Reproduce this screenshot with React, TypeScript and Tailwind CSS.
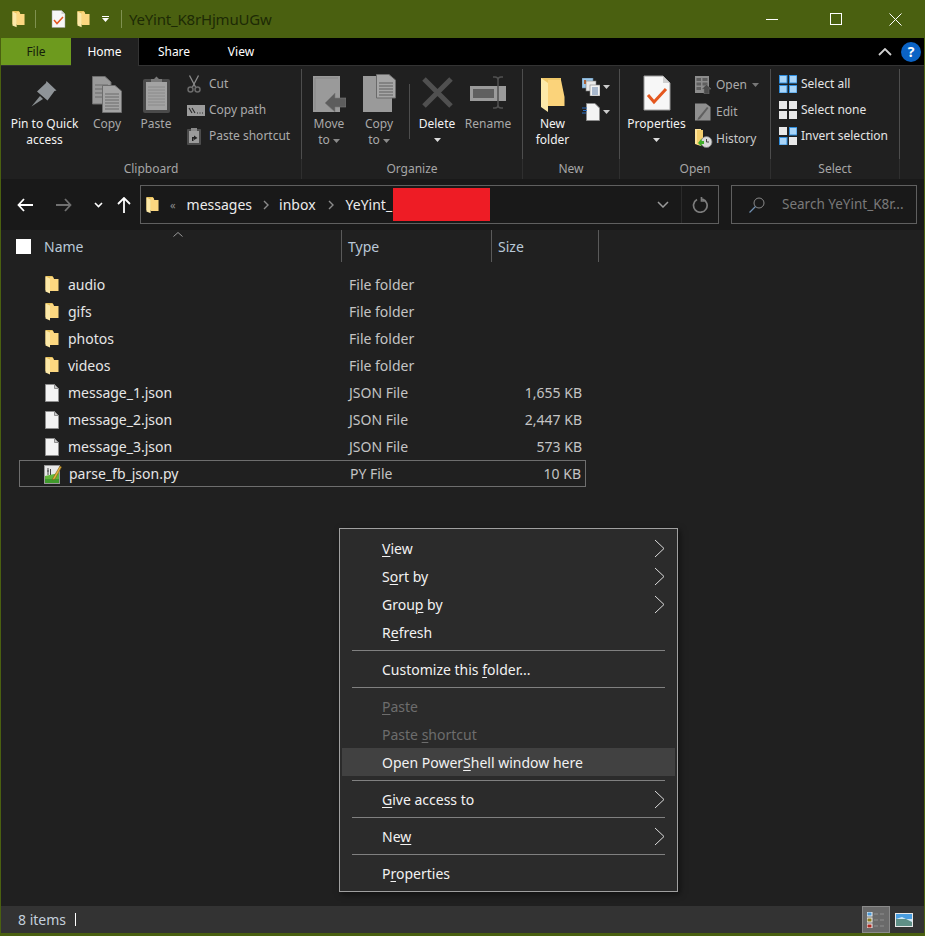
import React from "react";

const Folder = ({ w = 14, h = 19 }: { w?: number; h?: number }) => (
  <svg width={w} height={h} viewBox="0 0 14 19" className="block shrink-0">
    <path d="M0.5 1H7.5L8.5 3V15H0.5Z" fill="#e8c25c" />
    <path d="M5 2H8L9 4H13.5V16H5Z" fill="#fcd780" />
    <path d="M0.5 1.5L5 3.5V18.5L0.5 16.5Z" fill="#fde9a8" />
  </svg>
);

const FileIcon = () => (
  <svg width="14" height="18" viewBox="0 0 14 18" className="block shrink-0">
    <path d="M0.5 0.5H9.5L13.5 4.5V17.5H0.5Z" fill="#f4f4f4" stroke="#8f8f8f" />
    <path d="M9.5 0.5V4.5H13.5Z" fill="#c9c9c9" stroke="#8f8f8f" />
  </svg>
);

const PyIcon = () => (
  <svg width="18" height="20" viewBox="0 0 18 20" className="block shrink-0">
    <rect x="0.5" y="1.5" width="15" height="18" fill="#e8e8e8" stroke="#9a9a9a" />
    <path d="M1 12L15 9V19H1Z" fill="#62b53a" />
    <path d="M1 15H15V19H1Z" fill="#3f9a2c" />
    <path d="M4 4V11M6.5 5V11M3 7H5" stroke="#444" strokeWidth="1" />
    <path d="M9 14L16 2L17.5 3L11 15L8.5 16Z" fill="#e8b43c" stroke="#7a5a16" strokeWidth="0.6" />
  </svg>
);

const CheckDoc = ({ big }: { big?: boolean }) => (
  <svg width={big ? 28 : 15} height={big ? 36 : 18} viewBox="0 0 28 36" className="block shrink-0">
    <path d="M1 1H20L27 8V35H1Z" fill="#f7f7f7" stroke="#9a9a9a" strokeWidth="1" />
    <path d="M20 1V8H27Z" fill="#cfcfcf" />
    <path d="M5 20L11 27L23 14" fill="none" stroke="#e4571f" strokeWidth="3" />
  </svg>
);

const GrayDocs = () => (
  <svg width="30" height="37" viewBox="0 0 30 37" className="block">
    <path d="M0.5 0.5H13L19 6V28H0.5Z" fill="#9a9a9a" stroke="#6d6d6d" />
    <path d="M3 9H16M3 13H16M3 17H16M3 21H16" stroke="#6a6a6a" />
    <path d="M10.5 9.5H23L29.5 15V36.5H10.5Z" fill="#a4a4a4" stroke="#6d6d6d" />
    <path d="M13 18H27M13 21H27M13 24H27M13 27H27M13 30H27M13 33H27" stroke="#6a6a6a" />
  </svg>
);

const Clipboard = () => (
  <svg width="27" height="37" viewBox="0 0 27 37" className="block">
    <rect x="0" y="3" width="27" height="34" rx="2" fill="#4a4a4a" />
    <rect x="3" y="6" width="21" height="28" fill="#a3a3a3" />
    <path d="M5 11H22M5 14H22M5 17H22M5 20H22M5 23H22M5 26H22M5 29H22" stroke="#8a8a8a" />
    <path d="M8 6V3H11L13.500 0.500L16 3H19V6Z" fill="#7a7a7a" />
  </svg>
);

const Pin = () => (
  <svg width="27" height="26" viewBox="0 0 27 26" className="block">
    <path d="M0.5 25.500L9 15L12 18Z" fill="#8a8f92" />
    <path d="M6 10.500L15 2L15.500 0L25.500 9.500L23.500 10L16.500 19.500Z" fill="#8f9498" />
  </svg>
);

const Scissors = () => (
  <svg width="14" height="18" viewBox="0 0 14 18" className="block">
    <path d="M2.500 0.500L8.500 12M11.500 0.500L5.500 12" stroke="#8c8c8c" strokeWidth="1.300" fill="none" />
    <circle cx="3.500" cy="14.500" r="2.500" fill="none" stroke="#6a6a6a" strokeWidth="1.500" />
    <circle cx="10.500" cy="14.500" r="2.500" fill="none" stroke="#6a6a6a" strokeWidth="1.500" />
  </svg>
);

const CopyPath = () => (
  <svg width="18" height="11" viewBox="0 0 18 11" className="block">
    <rect width="18" height="11" fill="#9c9c9c" />
    <path d="M2 3L5 8M5 3L8 8" stroke="#2a2a2a" strokeWidth="1.100" />
    <path d="M10 8H11M12.500 8H13.500M15 8H16" stroke="#2a2a2a" />
  </svg>
);

const PasteShortcut = () => (
  <svg width="14" height="18" viewBox="0 0 14 18" className="block">
    <rect y="2" width="14" height="16" rx="1" fill="#4c4c4c" />
    <rect x="2" y="4" width="10" height="12" fill="#9b9b9b" />
    <path d="M4 1H10V4H4Z" fill="#8a8a8a" />
    <path d="M5 14V10H7V8.500L10.500 11L7 13V11.500H6.500V14Z" fill="#222" />
  </svg>
);

const MoveTo = () => (
  <svg width="33" height="36" viewBox="0 0 33 36" className="block">
    <rect width="27" height="36" fill="#9a9a9a" />
    <path d="M2 34V2H25" fill="none" stroke="#888" />
    <path d="M12 27L22 17V22H33V31H22V36Z" fill="#5d5d5d" stroke="#7a7a7a" strokeWidth="0.600" />
  </svg>
);

const CopyTo = () => (
  <svg width="33" height="38" viewBox="0 0 33 38" className="block">
    <path d="M0 2H14L29 8V38H0Z" fill="#9a9a9a" />
    <path d="M13.500 0.500H26L32.500 6V24H13.500Z" fill="#a6a6a6" stroke="#6a6a6a" />
    <path d="M16 9H30M16 12H30M16 15H30M16 18H30M16 21H30" stroke="#5f5f5f" />
  </svg>
);

const DeleteX = () => (
  <svg width="31" height="31" viewBox="0 0 31 31" className="block">
    <path d="M2 2L29 29M29 2L2 29" stroke="#505050" strokeWidth="5" />
  </svg>
);

const Rename = () => (
  <svg width="37" height="33" viewBox="0 0 37 33" className="block">
    <rect x="0" y="10" width="36" height="15" fill="#9a9a9a" />
    <rect x="3" y="13" width="21" height="9" fill="#5f5f5f" />
    <path d="M23 1H25Q28 1 28 4V29Q28 32 31 32H33M33 1H31Q28 1 28 4M28 29Q28 32 25 32H23" fill="none" stroke="#505050" strokeWidth="1.500" />
  </svg>
);

const BigFolder = () => (
  <svg width="24" height="35" viewBox="0 0 24 35" className="block">
    <path d="M0 1H20V28H0Z" fill="#efc768" />
    <path d="M7 3H20L23.500 20V29H7Z" fill="#fbd37a" />
    <path d="M0 1L7 6V35L0 30Z" fill="#fde9a8" />
  </svg>
);

const NewItem = () => (
  <svg width="18" height="18" viewBox="0 0 18 18" className="block">
    <rect x="0" y="0" width="11" height="10" fill="#9bc7ea" stroke="#5e7f9c" strokeWidth="0.600" />
    <rect x="4" y="3" width="10" height="10" fill="#e9e9e9" stroke="#7d7d7d" strokeWidth="0.600" />
    <rect x="8" y="7" width="10" height="11" fill="#f4f4f4" stroke="#7d7d7d" strokeWidth="0.600" />
    <path d="M10 10H16M10 12H16M10 14H16M10 16H16" stroke="#5f7ea8" />
    <rect x="2" y="2" width="2" height="4" fill="#a8633a" />
  </svg>
);

const EasyAccess = () => (
  <svg width="18" height="18" viewBox="0 0 18 18" className="block">
    <path d="M4.500 0.500H13L17.500 5V17.500H4.500Z" fill="#f4f4f4" stroke="#8c8c8c" />
    <path d="M0 5H5M1 7.500H5M0 10H4" stroke="#2a6fc4" strokeWidth="1.200" />
  </svg>
);

const OpenIcon = () => (
  <svg width="18" height="18" viewBox="0 0 18 18" className="block">
    <rect x="0" y="0" width="14" height="17" fill="#8d8d8d" />
    <path d="M1.500 2H6V5H1.500ZM1.500 6.500H6V9.500H1.500ZM1.500 11H6V14H1.500ZM7.500 2H12.500V5H7.500ZM7.500 6.500H12.500V9.500H7.500Z" fill="#5f5f5f" />
    <path d="M7 13L11.500 8.500L16 13H14V18H9V13Z" fill="#4c4c4c" stroke="#777" strokeWidth="0.500" />
  </svg>
);

const EditIcon = () => (
  <svg width="16" height="18" viewBox="0 0 16 18" className="block">
    <path d="M0 0.500H11L15.500 4V17.500H0Z" fill="#8f8f8f" />
    <path d="M3 15L12 4L13.500 5L5 16L2.500 17Z" fill="#5f5f5f" />
  </svg>
);

const HistoryIcon = () => (
  <svg width="18" height="19" viewBox="0 0 18 19" className="block">
    <path d="M0 0H6V17L0 15Z" fill="#fde39a" />
    <path d="M2 1H8V16H2Z" fill="#f3cd6c" />
    <circle cx="11.500" cy="13" r="5.500" fill="#d9d9d9" stroke="#7a7a7a" strokeWidth="0.800" />
    <path d="M11.500 10V13H14" stroke="#444" fill="none" />
    <path d="M3 14L6.500 9.500V12H9V15H6.500V17.500Z" fill="#3fae2a" />
  </svg>
);

const Grid = ({ on }: { on: boolean[] }) => (
  <svg width="18" height="18" viewBox="0 0 18 18" className="block">
    {on.some(Boolean) && <rect width="18" height="18" fill="none" />}
    {[0, 1, 2, 3].map((i) => {
      const x = i % 2 === 0 ? 0 : 10;
      const y = i < 2 ? 0 : 10;
      return on[i] ? (
        <rect key={i} x={x + 0.5} y={y + 0.5} width="7.500" height="7.500" fill="#a9d5f8" stroke="#2f8fe0" />
      ) : (
        <rect key={i} x={x} y={y} width="8" height="8" fill="#e9e9e9" />
      );
    })}
  </svg>
);

const Caret = ({ color = "#8a8a8a" }: { color?: string }) => (
  <svg width="7" height="4" viewBox="0 0 7 4" className="inline-block">
    <path d="M0 0H7L3.500 4Z" fill={color} />
  </svg>
);

const Big = ({
  w,
  icon,
  lines,
  color = "text-[#a9a9a9]",
  iconH = 47,
  caret,
}: {
  w: number;
  icon: React.ReactNode;
  lines: React.ReactNode[];
  color?: string;
  iconH?: number;
  caret?: string;
}) => (
  <div className={`flex flex-col items-center shrink-0 ${color}`} style={{ width: w }}>
    <div className="flex items-start justify-center" style={{ height: iconH }}>
      {icon}
    </div>
    {lines.map((l, i) => (
      <div key={i} className="h-4 leading-4 whitespace-nowrap">
        {l}
      </div>
    ))}
    {caret && (
      <div className="h-4 flex items-center justify-center">
        <Caret color={caret} />
      </div>
    )}
  </div>
);

const Small = ({
  icon,
  text,
  color = "text-[#ababab]",
  h = "h-[26px]",
  iconW = "w-[22px]",
  extra,
}: {
  icon: React.ReactNode;
  text: string;
  color?: string;
  h?: string;
  iconW?: string;
  extra?: React.ReactNode;
}) => (
  <div className={`flex items-center ${h} ${color} whitespace-nowrap`}>
    <div className={`${iconW} flex justify-start items-center shrink-0`}>{icon}</div>
    <span>{text}</span>
    {extra}
  </div>
);

const Group = ({
  w,
  label,
  children,
}: {
  w: number;
  label: string;
  children: React.ReactNode;
}) => (
  <div className="flex flex-col shrink-0" style={{ width: w }}>
    <div className="h-[91px] mt-[3px] flex border-r border-[#4d4d4d]">{children}</div>
    <div className="h-[20px] flex items-center justify-center text-[#a6a6a6] border-r border-[#2f2f2f]">
      {label}
    </div>
  </div>
);

const files = [
  { n: "audio", t: "File folder", s: "", k: "f" },
  { n: "gifs", t: "File folder", s: "", k: "f" },
  { n: "photos", t: "File folder", s: "", k: "f" },
  { n: "videos", t: "File folder", s: "", k: "f" },
  { n: "message_1.json", t: "JSON File", s: "1,655 KB", k: "d" },
  { n: "message_2.json", t: "JSON File", s: "2,447 KB", k: "d" },
  { n: "message_3.json", t: "JSON File", s: "573 KB", k: "d" },
  { n: "parse_fb_json.py", t: "PY File", s: "10 KB", k: "p" },
];

const Chevron = () => (
  <svg width="11" height="19" viewBox="0 0 11 19" className="block">
    <path d="M1 1L10 9.500L1 18" fill="none" stroke="#dcdcdc" strokeWidth="1" />
  </svg>
);

const Item = ({
  children,
  arrow,
  dim,
  hover,
}: {
  children: React.ReactNode;
  arrow?: boolean;
  dim?: boolean;
  hover?: boolean;
}) => (
  <div
    className={`h-7 flex items-center justify-between pl-[40px] pr-[10px] ${dim ? "text-[#6d6d6d]" : "text-[#f2f2f2]"} ${hover ? "bg-[#414141]" : ""}`}
  >
    <span className="whitespace-nowrap">{children}</span>
    {arrow && <Chevron />}
  </div>
);

const Sep = () => (
  <div className="h-[9px] flex items-center px-[10px]">
    <div className="h-px w-full bg-[#808080]" />
  </div>
);

const U = ({ children }: { children: React.ReactNode }) => (
  <span className="underline underline-offset-2 decoration-1">{children}</span>
);

export default function App() {
  return (
    <div className="relative w-[925px] h-[936px] flex flex-col bg-[#202020] border-x border-b-[3px] border-[#4a6010] font-['Noto_Sans',sans-serif] text-[12px] text-white overflow-hidden">
      {/* title bar */}
      <div className="h-[38px] shrink-0 bg-[#4a6010] flex items-center -mx-px">
        <div className="ml-[12px] w-[13px]">
          <Folder w={13} h={18} />
        </div>
        <div className="ml-[10px] w-px h-[18px] bg-[#7f9150]" />
        <div className="ml-[15px]">
          <CheckDoc />
        </div>
        <div className="ml-[11px]">
          <Folder w={13} h={18} />
        </div>
        <div className="ml-[12px] flex flex-col items-center gap-px w-[7px]">
          <div className="h-px w-[7px] bg-white" />
          <Caret color="#ffffff" />
        </div>
        <div className="ml-[12px] w-px h-[18px] bg-[#7f9150]" />
        <div className="ml-[7px] text-[15px] tracking-[-0.2px] text-[#1d2a05]">YeYint_K8rHjmuUGw</div>
        <div className="ml-auto flex items-center h-full">
          <div className="w-[46px] flex justify-center">
            <div className="w-[12px] h-px bg-white" />
          </div>
          <div className="w-[58px] ml-[12px] flex justify-center">
            <div className="w-[12px] h-[12px] border border-white" />
          </div>
          <div className="w-[60px] flex justify-center">
            <svg width="13" height="13" viewBox="0 0 13 13">
              <path d="M0.500 0.500L12.500 12.500M12.500 0.500L0.500 12.500" stroke="#fff" strokeWidth="1" />
            </svg>
          </div>
        </div>
      </div>

      {/* tabs */}
      <div className="h-[28px] shrink-0 bg-black flex items-stretch text-[12px] border-b border-[#333]">
        <div className="w-[70px] bg-[#6d9a1e] text-[#14200a] flex items-center justify-center">File</div>
        <div className="w-[68px] bg-[#202020] flex items-center justify-center -mb-px border-r border-[#333]">Home</div>
        <div className="w-[70px] flex items-center justify-center">Share</div>
        <div className="w-[64px] flex items-center justify-center">View</div>
        <div className="ml-auto flex items-center gap-[9px] pr-[3px]">
          <svg width="14" height="8" viewBox="0 0 14 8">
            <path d="M1 7L7 1L13 7" fill="none" stroke="#d0d0d0" strokeWidth="1.800" />
          </svg>
          <div className="w-5 h-5 rounded-full bg-[#0b63c5] text-white font-bold text-[14px] flex items-center justify-center">?</div>
        </div>
      </div>

      {/* ribbon */}
      <div className="h-[114px] shrink-0 flex bg-[#202020] border-b border-[#2b2b2b]">
        <Group w={301} label="Clipboard">
          <Big w={87} icon={<div className="mt-[12px]"><Pin /></div>} color="text-[#f2f2f2]" lines={["Pin to Quick", "access"]} />
          <Big w={38} icon={<div className="mt-[7px]"><GrayDocs /></div>} lines={["Copy"]} />
          <Big w={60} icon={<div className="mt-[7px]"><Clipboard /></div>} lines={["Paste"]} />
          <div className="mt-[2px] ml-[1px]">
            <Small icon={<Scissors />} text="Cut" />
            <Small icon={<CopyPath />} text="Copy path" />
            <Small icon={<PasteShortcut />} text="Paste shortcut" />
          </div>
        </Group>
        <Group w={221} label="Organize">
          <Big w={54} icon={<div className="mt-[7px]"><MoveTo /></div>} lines={[<span key="m">Move</span>, <span key="t">to <Caret /></span>]} />
          <Big w={46} icon={<div className="mt-[5px]"><CopyTo /></div>} lines={[<span key="c">Copy</span>, <span key="t">to <Caret /></span>]} />
          <div className="w-[15px] flex justify-center shrink-0">
            <div className="w-px h-[55px] mt-[15px] bg-[#4d4d4d] ml-[-1px]" />
          </div>
          <Big w={40} icon={<div className="mt-[8px]"><DeleteX /></div>} color="text-[#f2f2f2]" lines={["Delete"]} caret="#dddddd" />
          <Big w={62} icon={<div className="mt-[7px]"><Rename /></div>} lines={["Rename"]} />
        </Group>
        <Group w={97} label="New">
          <Big w={59} icon={<div className="mt-[8px]"><BigFolder /></div>} color="text-[#f2f2f2]" lines={["New", "folder"]} />
          <div className="flex flex-col mt-[5px]">
            <div className="h-[25px] flex items-center gap-[3px]"><NewItem /><Caret color="#cccccc" /></div>
            <div className="h-[25px] flex items-center gap-[3px]"><EasyAccess /><Caret color="#cccccc" /></div>
          </div>
        </Group>
        <Group w={151} label="Open">
          <Big w={73} icon={<div className="mt-[6px]"><CheckDoc big /></div>} color="text-[#f2f2f2]" lines={["Properties"]} caret="#dddddd" />
          <div className="mt-[2px] ml-[2px]">
            <Small h="h-[27px]" iconW="w-[21px]" icon={<OpenIcon />} text="Open" extra={<span className="ml-[5px] flex"><Caret color="#777777" /></span>} />
            <Small h="h-[27px]" iconW="w-[21px]" icon={<EditIcon />} text="Edit" />
            <Small h="h-[27px]" iconW="w-[21px]" icon={<HistoryIcon />} text="History" color="text-[#c9c9c9]" />
          </div>
        </Group>
        <Group w={129} label="Select">
          <div className="mt-[2px] ml-[8px]">
            <Small color="text-[#e4e4e4]" icon={<Grid on={[true, true, true, true]} />} text="Select all" />
            <Small color="text-[#e4e4e4]" icon={<Grid on={[false, false, false, false]} />} text="Select none" />
            <Small color="text-[#e4e4e4]" icon={<Grid on={[false, true, true, false]} />} text="Invert selection" />
          </div>
        </Group>
      </div>

      {/* address bar */}
      <div className="h-[51px] shrink-0 bg-[#191919] flex items-center text-[14px] -mt-px">
        <svg width="16" height="14" viewBox="0 0 16 14" className="ml-[16px] shrink-0">
          <path d="M7 1L1.500 7L7 13M1.500 7H16" fill="none" stroke="#fff" strokeWidth="1.800" />
        </svg>
        <svg width="16" height="14" viewBox="0 0 16 14" className="ml-[23px] shrink-0">
          <path d="M9 1L14.500 7L9 13M14.500 7H0" fill="none" stroke="#707070" strokeWidth="1.800" />
        </svg>
        <svg width="9" height="6" viewBox="0 0 9 6" className="ml-[22px] shrink-0">
          <path d="M1 1L4.500 4.500L8 1" fill="none" stroke="#fff" strokeWidth="1.600" />
        </svg>
        <svg width="14" height="16" viewBox="0 0 14 16" className="ml-[14px] shrink-0">
          <path d="M1 7L7 1L13 7M7 1V16" fill="none" stroke="#fff" strokeWidth="1.800" />
        </svg>
        <div className="ml-[9px] w-[579px] h-[39px] border border-[#5f5f5f] flex items-center shrink-0">
          <div className="ml-[5px]"><Folder w={13} h={18} /></div>
          <span className="ml-[11px] text-[#8a8a8a] text-[11px] leading-none">«</span>
          <span className="ml-[11px] text-[#ececec]">messages</span>
          <svg width="6" height="10" viewBox="0 0 6 10" className="ml-[11px]"><path d="M1 1L5 5L1 9" fill="none" stroke="#8a8a8a" strokeWidth="1.400" /></svg>
          <span className="ml-[10px] text-[#ececec]">inbox</span>
          <svg width="6" height="10" viewBox="0 0 6 10" className="ml-[12px]"><path d="M1 1L5 5L1 9" fill="none" stroke="#8a8a8a" strokeWidth="1.400" /></svg>
          <span className="ml-[12px] text-[#ececec]">YeYint_</span>
          <div className="w-[97px] h-[33px] bg-[#ee1c25] ml-[1px]" />
          <div className="ml-auto flex items-center h-full">
            <svg width="12" height="7" viewBox="0 0 12 7" className="mr-[12px]"><path d="M1 1L6 6L11 1" fill="none" stroke="#9a9a9a" strokeWidth="1.500" /></svg>
            <div className="w-px h-full bg-[#2a2a2a]" />
            <svg width="16" height="16" viewBox="0 0 16 16" className="mx-[10px]"><path d="M5 2.500A6.800 6.800 0 1 0 10.500 2M9.500 0V4H13.500" transform="rotate(0)" fill="none" stroke="#7d7d7d" strokeWidth="1.700" /></svg>
          </div>
        </div>
        <div className="ml-[12px] w-[186px] h-[39px] border border-[#5f5f5f] flex items-center shrink-0">
          <svg width="16" height="16" viewBox="0 0 16 16" className="ml-[17px]">
            <circle cx="10" cy="6" r="5" fill="none" stroke="#8a8a8a" strokeWidth="1" />
            <path d="M6.500 9.500L0.500 15.500" stroke="#6f8fb0" strokeWidth="1.200" />
          </svg>
          <span className="ml-[17px] text-[13.500px] text-[#7a7a7a] whitespace-nowrap">Search YeYint_K8r...</span>
        </div>
      </div>

      {/* header + list */}
      <div className="flex-1 relative text-[14px]">
        <div className="h-[32px] flex relative text-[#b9c8d8]">
          <div className="w-[340px] flex items-center shrink-0 relative">
            <div className="ml-[15px] w-[15px] h-[15px] bg-white" />
            <span className="ml-[13px]">Name</span>
            <svg width="10" height="5" viewBox="0 0 10 5" className="absolute left-[172px] top-[2px]"><path d="M0.500 4.500L5 0.500L9.500 4.500" fill="none" stroke="#9a9a9a" /></svg>
          </div>
          <div className="w-[150px] flex items-center pl-[6px] border-l border-[#5a5a5a] shrink-0">Type</div>
          <div className="w-[100px] flex items-center pl-[6px] border-x border-[#5a5a5a] box-content shrink-0 -mr-px">Size</div>
        </div>
        <div className="pt-[9px]">
          {files.map((f) => (
            <div key={f.n} className={`flex items-center h-[27px] w-[567px] ml-[18px] ${f.k === "p" ? "border border-[#6e6e6e]" : ""} -my-0`}>
              <div className={`w-[49px] flex shrink-0 ${f.k === "p" ? "pl-[24px] w-[49px]" : "pl-[26px]"}`}>
                {f.k === "f" ? <Folder /> : f.k === "d" ? <FileIcon /> : <PyIcon />}
              </div>
              <span className="w-[280px] text-[#e6e6e6] shrink-0">{f.n}</span>
              <span className="w-[150px] pl-[1px] text-[#c4c4c4] shrink-0">{f.t}</span>
              <span className="flex-1 text-right pr-[4px] text-[#c4c4c4]">{f.s}</span>
            </div>
          ))}
        </div>

        {/* context menu */}
        <div className="absolute left-[338px] top-[298px] w-[339px] h-[364px] bg-[#2b2b2b] border border-[#a0a0a0] py-[5px] px-[2px] shadow-[2px_2px_6px_rgba(0,0,0,0.5)]">
          <Item arrow><U>V</U>iew</Item>
          <Item arrow>S<U>o</U>rt by</Item>
          <Item arrow>Grou<U>p</U> by</Item>
          <Item>R<U>e</U>fresh</Item>
          <Sep />
          <Item>Customize this <U>f</U>older...</Item>
          <Sep />
          <Item dim><U>P</U>aste</Item>
          <Item dim>Paste <U>s</U>hortcut</Item>
          <Item hover>Open Power<U>S</U>hell window here</Item>
          <Sep />
          <Item arrow><U>G</U>ive access to</Item>
          <Sep />
          <Item arrow>Ne<U>w</U></Item>
          <Sep />
          <Item>P<U>r</U>operties</Item>
        </div>
      </div>

      {/* status bar */}
      <div className="h-[27px] shrink-0 bg-[#333333] flex items-center text-[14px] text-[#c4d0dc]">
        <span className="ml-[17px]">8 items</span>
        <div className="ml-[9px] w-px h-[13px] bg-white" />
        <div className="ml-auto flex items-center h-full">
          <div className="w-[28px] h-full bg-[#6a6a6a] border border-[#8a8a8a] flex items-center justify-center">
            <svg width="18" height="16" viewBox="0 0 18 16">
              <rect x="0" y="0" width="5" height="4" fill="#4a9ad8" stroke="#eee" />
              <rect x="0" y="6" width="5" height="4" fill="#8a7a20" stroke="#eee" />
              <rect x="0" y="12" width="5" height="4" fill="#b02a20" stroke="#eee" />
              <path d="M7 2H11M13 2H17M7 8H11M13 8H17M7 14H11M13 14H17" stroke="#8e8e8e" />
            </svg>
          </div>
          <div className="w-[34px] flex items-center justify-center pr-[10px] pl-[4px]">
            <svg width="18" height="14" viewBox="0 0 18 14">
              <rect width="18" height="14" fill="#e8e8e8" />
              <rect x="1" y="1" width="16" height="5" fill="#4a9ee0" />
              <rect x="1" y="6" width="16" height="7" fill="#5f8f86" />
              <path d="M1 6L7 4L17 9V6Z" fill="#cfe8f5" />
            </svg>
          </div>
        </div>
      </div>
    </div>
  );
}
